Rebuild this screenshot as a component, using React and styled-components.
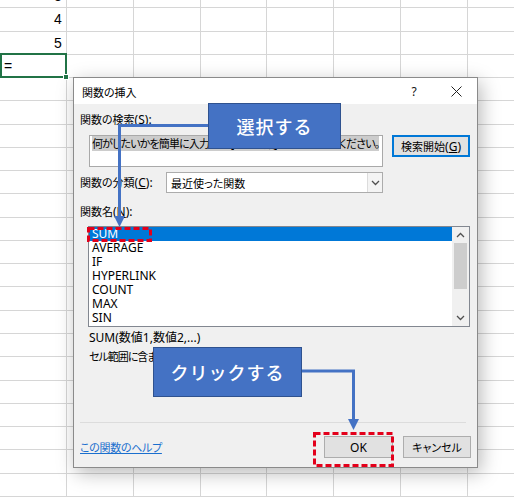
import React from 'react';
import styled, { createGlobalStyle, css } from 'styled-components';

const Global = createGlobalStyle`
  html, body { margin: 0; padding: 0; background: #fff; }
  body { overflow: hidden; }
`;

const Stage = styled.div`
  position: relative;
  width: 514px;
  height: 499px;
  overflow: hidden;
  font-family: "Noto Sans", "Noto Sans CJK JP", sans-serif;
`;

const Sheet = styled.div`
  display: grid;
  grid-template-columns: repeat(8, 66.85px);
  grid-auto-rows: 23.27px;
  margin-top: -15px;
`;

const Cell = styled.div`
  position: relative;
  box-sizing: border-box;
  border-right: 1px solid #d6d6d6;
  border-bottom: 1px solid #d6d6d6;
  display: flex;
  align-items: center;
  justify-content: ${p => (p.$left ? 'flex-start' : 'flex-end')};
  padding: 0 4px;
  font: 14px "Liberation Sans", sans-serif;
  color: #000;
  ${p => p.$active && css`
    z-index: 1;
    &::before {
      content: '';
      position: absolute;
      left: 0; top: -2px; right: -1px; bottom: -1px;
      border: 2px solid #217346;
    }
    &::after {
      content: '';
      position: absolute;
      right: -3px; bottom: -3px;
      width: 4px; height: 4px;
      background: #217346;
      border: 1px solid #fff;
    }
  `}
`;

const Dialog = styled.div`
  position: absolute;
  left: 73px;
  top: 77px;
  width: 405px;
  height: 391px;
  box-sizing: border-box;
  border: 1px solid #8a8a8a;
  background: #f0f0f0;
  box-shadow: 3px 5px 18px rgba(0, 0, 0, 0.28);
  display: flex;
  flex-direction: column;
  font-size: 12px;
  color: #000;
  font-feature-settings: "palt";
`;

/* Japanese runs: Meiryo UI-like narrow kana */
const Jp = styled.span`
  font-size: 11px;
  letter-spacing: ${p => p.$ls || 0}px;
`;

const TitleBar = styled.div`
  height: 26px;
  background: #fff;
  display: flex;
  align-items: center;
  padding: 0 6px 0 8px;
`;

const Title = styled.div`
  flex: 1;
  font-size: 11px;
  padding-top: 1px;
`;

const TitleButton = styled.div`
  width: 30px;
  height: 26px;
  display: flex;
  align-items: center;
  justify-content: center;
  margin-left: ${p => p.$gap || 0}px;
  font-size: 12px;
  color: #111;
`;

const Body = styled.div`
  flex: 1;
  display: flex;
  flex-direction: column;
  padding: 0 6px;
`;

const Label = styled.div`
  line-height: 16px;
  margin-top: ${p => p.$mt}px;
  white-space: nowrap;
`;

const Row = styled.div`
  display: flex;
  align-items: ${p => p.$align || 'flex-start'};
  margin-top: ${p => p.$mt}px;
`;

const SearchBox = styled.div`
  box-sizing: border-box;
  width: 294px;
  height: 32px;
  margin-left: 9px;
  background: #fff;
  border: 1px solid #a9a9a9;
  padding: 1px 2px;
  overflow: hidden;
  white-space: nowrap;
  line-height: 14px;
  font-size: 11px;
  letter-spacing: -0.85px;
`;

const Highlight = styled.span`
  background: #cccccc;
`;

const Button = styled.div`
  box-sizing: border-box;
  width: ${p => p.$w}px;
  height: 22px;
  margin-left: ${p => p.$ml || 0}px;
  background: #e1e1e1;
  border: 1px solid ${p => (p.$default ? '#0078d7' : '#adadad')};
  ${p => p.$default && css`box-shadow: inset 0 0 0 1px #0078d7;`}
  display: flex;
  align-items: center;
  justify-content: center;
  white-space: nowrap;
`;

const CategoryLabel = styled.div`
  width: 86px;
  white-space: nowrap;
`;

const Select = styled.div`
  box-sizing: border-box;
  width: 217px;
  height: 21px;
  background: #fff;
  border: 1px solid #acacac;
  display: flex;
  align-items: center;
`;

const SelectText = styled.div`
  flex: 1;
  padding-left: 4px;
  font-size: 11px;
`;

const SelectArrow = styled.div`
  width: 15px;
  height: 100%;
  box-sizing: border-box;
  border-left: 1px solid #dcdcdc;
  background: #f4f4f4;
  display: flex;
  align-items: center;
  justify-content: center;
`;

const ListBox = styled.div`
  box-sizing: border-box;
  width: 382px;
  height: 101px;
  margin-top: 6px;
  margin-left: 8px;
  background: #fff;
  border: 1px solid #828790;
  display: flex;
`;

const Items = styled.div`
  flex: 1;
  display: flex;
  flex-direction: column;
`;

const Item = styled.div`
  height: 14px;
  line-height: 14px;
  padding-left: 3px;
  white-space: nowrap;
  background: ${p => (p.$selected ? '#0078d7' : 'transparent')};
  color: ${p => (p.$selected ? '#fff' : '#000')};
`;

const ScrollBar = styled.div`
  width: 17px;
  background: #f0f0f0;
  display: flex;
  flex-direction: column;
  align-items: center;
`;

const ScrollArrow = styled.div`
  width: 17px;
  height: 16px;
  display: flex;
  align-items: center;
  justify-content: center;
`;

const Thumb = styled.div`
  width: 13px;
  height: 46px;
  background: #cdcdcd;
`;

const Track = styled.div`
  flex: 1;
`;

const Desc = styled.div`
  line-height: 19px;
  margin-left: 9px;
  white-space: nowrap;
  margin-top: ${p => p.$mt || 0}px;
`;

const Separator = styled.div`
  height: 1px;
  background: #dcdcdc;
  margin-top: 56px;
  margin-right: 5px;
`;

const Footer = styled.div`
  display: flex;
  align-items: center;
  margin-top: 13px;
  height: 22px;
`;

const HelpLink = styled.a`
  flex: 1;
  color: #1a6fce;
  text-decoration: underline;
  cursor: pointer;
  font-size: 11px;
  letter-spacing: -0.3px;
`;

const Callout = styled.div`
  position: absolute;
  left: ${p => p.$x}px;
  top: ${p => p.$y}px;
  width: ${p => p.$w}px;
  height: ${p => p.$h}px;
  box-sizing: border-box;
  background: #4472c4;
  border: 1px solid #2f528f;
  color: #fff;
  font-family: "Noto Sans CJK JP", sans-serif;
  font-size: 18px;
  font-weight: 500;
  letter-spacing: 1px;
  display: flex;
  align-items: center;
  justify-content: center;
  z-index: 3;
`;

const Overlay = styled.svg`
  position: absolute;
  left: 0;
  top: 0;
  pointer-events: none;
  z-index: 4;
`;

const Chevron = ({ up }) => (
  <svg width="9" height="6" viewBox="0 0 9 6">
    <path d={up ? 'M1 5 L4.5 1.5 L8 5' : 'M1 1 L4.5 4.5 L8 1'} fill="none" stroke="#505050" strokeWidth="1.3" />
  </svg>
);

const rows = 22;
const cols = 8;
const cellText = { '0-0': '3', '1-0': '4', '2-0': '5', '3-0': '=' };

const functions = ['SUM', 'AVERAGE', 'IF', 'HYPERLINK', 'COUNT', 'MAX', 'SIN'];

export default function App() {
  const cells = [];
  for (let r = 0; r < rows; r++) {
    for (let c = 0; c < cols; c++) {
      const key = `${r}-${c}`;
      cells.push(
        <Cell key={key} $active={key === '3-0'} $left={key === '3-0'}>
          {cellText[key] || ''}
        </Cell>
      );
    }
  }

  return (
    <Stage>
      <Global />
      <Sheet>{cells}</Sheet>

      <Dialog>
        <TitleBar>
          <Title>関数の挿入</Title>
          <TitleButton>?</TitleButton>
          <TitleButton $gap={12}>
            <svg width="11" height="11" viewBox="0 0 11 11">
              <path d="M0.5 0.5 L10.5 10.5 M10.5 0.5 L0.5 10.5" stroke="#222" strokeWidth="1" />
            </svg>
          </TitleButton>
        </TitleBar>
        <Body>
          <Label $mt={8}><Jp>関数の検索</Jp>(<u>S</u>):</Label>
          <Row $mt={7}>
            <SearchBox>
              <Highlight>何がしたいかを簡単に入力して、[検索開始] をクリックしてください。</Highlight>
            </SearchBox>
            <Button $w={78} $ml={9} $default><Jp>検索開始</Jp>(<u>G</u>)</Button>
          </Row>
          <Row $mt={5} $align="center">
            <CategoryLabel><Jp>関数の分類</Jp>(<u>C</u>):</CategoryLabel>
            <Select>
              <SelectText>最近使った関数</SelectText>
              <SelectArrow><Chevron /></SelectArrow>
            </Select>
          </Row>
          <Label $mt={11}><Jp>関数名</Jp>(<u>N</u>):</Label>
          <ListBox>
            <Items>
              {functions.map((f, i) => (
                <Item key={f} $selected={i === 0}>{f}</Item>
              ))}
            </Items>
            <ScrollBar>
              <ScrollArrow><Chevron up /></ScrollArrow>
              <Thumb />
              <Track />
              <ScrollArrow><Chevron /></ScrollArrow>
            </ScrollBar>
          </ListBox>
          <Desc $mt={1}>SUM(数値1,数値2,...)</Desc>
          <Desc><Jp $ls={-1}>セル範囲に含まれる数値をすべて合計します。</Jp></Desc>
          <Separator />
          <Footer>
            <HelpLink>この関数のヘルプ</HelpLink>
            <Button $w={69}>OK</Button>
            <Button $w={68} $ml={10}><Jp>キャンセル</Jp></Button>
          </Footer>
        </Body>
      </Dialog>

      <Callout $x={208} $y={103} $w={133} $h={46}>選択する</Callout>
      <Callout $x={153} $y={347} $w={149} $h={50}>クリックする</Callout>

      <Overlay width="514" height="499" viewBox="0 0 514 499">
        <path d="M208 125.5 H119.5 V217" fill="none" stroke="#4472c4" strokeWidth="3" />
        <polygon points="114,216 125,216 119.5,227" fill="#4472c4" />
        <path d="M302 371 H353.5 V420" fill="none" stroke="#4472c4" strokeWidth="3" />
        <polygon points="348,419 359,419 353.5,430" fill="#4472c4" />
        <rect x="88.5" y="228.5" width="62" height="12" fill="none" stroke="#e3001b" strokeWidth="3" strokeDasharray="6 3" />
        <rect x="314.5" y="433.5" width="78" height="32" fill="none" stroke="#e3001b" strokeWidth="3" strokeDasharray="6 3" />
      </Overlay>
    </Stage>
  );
}
